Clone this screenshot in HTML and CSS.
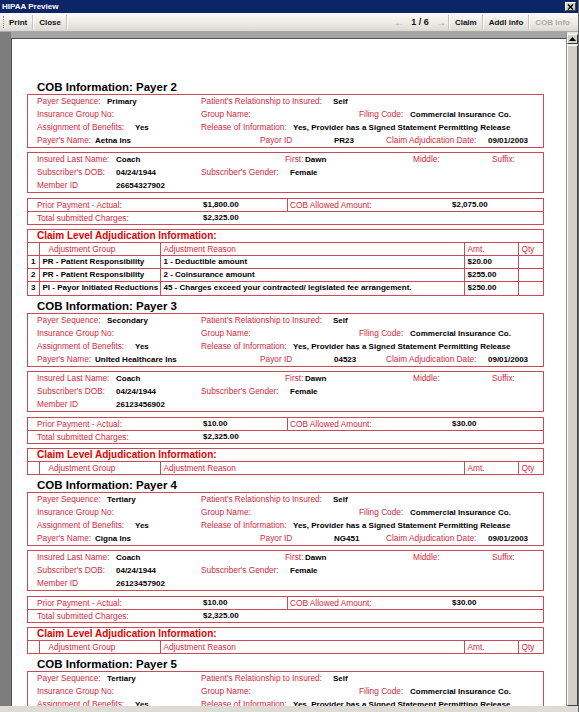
FILE: index.html
```html
<!DOCTYPE html>
<html>
<head>
<meta charset="utf-8">
<title>HIPAA Preview</title>
<link rel="stylesheet" href="styles.css">
</head>
<body>
<div class="window">
  <div class="titlebar">
    <span class="title">HIPAA Preview</span>
    <span class="xbtn"><svg width="7" height="6" viewBox="0 0 7 6"><path d="M1 0.5 L6 5.5 M6 0.5 L1 5.5" stroke="#000" stroke-width="1.4"/></svg></span>
  </div>
  <div class="toolbar">
    <span class="grip"></span>
    <span class="tb first">Print</span><span class="sep"></span>
    <span class="tb">Close</span><span class="sep"></span>
    <span class="spacer"></span>
    <span class="arrow">&#8592;</span><span class="pager">1 / 6</span><span class="arrow">&#8594;</span><span class="sep"></span>
    <span class="tb">Claim</span><span class="sep"></span>
    <span class="tb">Addl info</span><span class="sep"></span>
    <span class="tb dis">COB info</span>
  </div>
  <div class="viewer">
    <div class="docarea">
      <div class="page">

        <section class="payer">
          <h2 class="ph">COB Information: Payer 2</h2>
          <div class="box">
            <div class="row"><span class="l w70">Payer Sequence:</span><span class="v w94">Primary</span><span class="l w132">Patient's Relationship to Insured:</span><span class="v">Self</span></div>
            <div class="row"><span class="l w164">Insurance Group No:</span><span class="l w158">Group Name:</span><span class="l w51">Filing Code:</span><span class="v">Commercial Insurance Co.</span></div>
            <div class="row"><span class="l w98">Assignment of Benefits:</span><span class="v w66">Yes</span><span class="l w92">Release of Information:</span><span class="v">Yes, Provider has a Signed Statement Permitting Release</span></div>
            <div class="row"><span class="l w58">Payer's Name:</span><span class="v w165">Aetna Ins</span><span class="l w74">Payor ID</span><span class="v w52">PR23</span><span class="l w102">Claim Adjudication Date:</span><span class="v">09/01/2003</span></div>
          </div>
          <div class="box gap4">
            <div class="row"><span class="l w79">Insured Last Name:</span><span class="v w169">Coach</span><span class="l w20">First:</span><span class="v w108">Dawn</span><span class="l w79">Middle:</span><span class="l">Suffix:</span></div>
            <div class="row"><span class="l w79">Subscriber's DOB:</span><span class="v w85">04/24/1944</span><span class="l w89">Subscriber's Gender:</span><span class="v">Female</span></div>
            <div class="row"><span class="l w79">Member ID</span><span class="v">26654327902</span></div>
          </div>
          <div class="box pay gap5">
            <div class="prow top"><div class="pcell left"><span class="l w166">Prior Payment - Actual:</span><span class="v">$1,800.00</span></div><div class="pcell right"><span class="l w162">COB Allowed Amount:</span><span class="v">$2,075.00</span></div></div>
            <div class="prow"><div class="pcell left"><span class="l w166">Total submitted Charges:</span><span class="v">$2,325.00</span></div></div>
          </div>
          <div class="box adj gap4">
            <div class="adjtitle">Claim Level Adjudication Information:</div>
            <table class="adjt">
              <colgroup><col class="cn"><col class="cg"><col class="cr"><col class="ca"><col class="cq"></colgroup>
              <tr class="hdr"><td></td><td class="hg">Adjustment Group</td><td>Adjustment Reason</td><td>Amt.</td><td>Qty</td></tr>
              <tr><td class="num">1</td><td>PR - Patient Responsibility</td><td>1 - Deductible amount</td><td>$20.00</td><td></td></tr>
              <tr><td class="num">2</td><td>PR - Patient Responsibility</td><td>2 - Coinsurance amount</td><td>$255.00</td><td></td></tr>
              <tr><td class="num">3</td><td>PI - Payor Initiated Reductions</td><td>45 - Charges exceed your contracted/ legislated fee arrangement.</td><td>$250.00</td><td></td></tr>
            </table>
          </div>
        </section>

        <section class="payer">
          <h2 class="ph">COB Information: Payer 3</h2>
          <div class="box">
            <div class="row"><span class="l w70">Payer Sequence:</span><span class="v w94">Secondary</span><span class="l w132">Patient's Relationship to Insured:</span><span class="v">Self</span></div>
            <div class="row"><span class="l w164">Insurance Group No:</span><span class="l w158">Group Name:</span><span class="l w51">Filing Code:</span><span class="v">Commercial Insurance Co.</span></div>
            <div class="row"><span class="l w98">Assignment of Benefits:</span><span class="v w66">Yes</span><span class="l w92">Release of Information:</span><span class="v">Yes, Provider has a Signed Statement Permitting Release</span></div>
            <div class="row"><span class="l w58">Payer's Name:</span><span class="v w165">United Healthcare Ins</span><span class="l w74">Payor ID</span><span class="v w52">04523</span><span class="l w102">Claim Adjudication Date:</span><span class="v">09/01/2003</span></div>
          </div>
          <div class="box gap4">
            <div class="row"><span class="l w79">Insured Last Name:</span><span class="v w169">Coach</span><span class="l w20">First:</span><span class="v w108">Dawn</span><span class="l w79">Middle:</span><span class="l">Suffix:</span></div>
            <div class="row"><span class="l w79">Subscriber's DOB:</span><span class="v w85">04/24/1944</span><span class="l w89">Subscriber's Gender:</span><span class="v">Female</span></div>
            <div class="row"><span class="l w79">Member ID</span><span class="v">26123456902</span></div>
          </div>
          <div class="box pay gap5">
            <div class="prow top"><div class="pcell left"><span class="l w166">Prior Payment - Actual:</span><span class="v">$10.00</span></div><div class="pcell right"><span class="l w162">COB Allowed Amount:</span><span class="v">$30.00</span></div></div>
            <div class="prow"><div class="pcell left"><span class="l w166">Total submitted Charges:</span><span class="v">$2,325.00</span></div></div>
          </div>
          <div class="box adj gap4">
            <div class="adjtitle">Claim Level Adjudication Information:</div>
            <table class="adjt">
              <colgroup><col class="cn"><col class="cg"><col class="cr"><col class="ca"><col class="cq"></colgroup>
              <tr class="hdr"><td></td><td class="hg">Adjustment Group</td><td>Adjustment Reason</td><td>Amt.</td><td>Qty</td></tr>
            </table>
          </div>
        </section>

        <section class="payer">
          <h2 class="ph">COB Information: Payer 4</h2>
          <div class="box">
            <div class="row"><span class="l w70">Payer Sequence:</span><span class="v w94">Tertiary</span><span class="l w132">Patient's Relationship to Insured:</span><span class="v">Self</span></div>
            <div class="row"><span class="l w164">Insurance Group No:</span><span class="l w158">Group Name:</span><span class="l w51">Filing Code:</span><span class="v">Commercial Insurance Co.</span></div>
            <div class="row"><span class="l w98">Assignment of Benefits:</span><span class="v w66">Yes</span><span class="l w92">Release of Information:</span><span class="v">Yes, Provider has a Signed Statement Permitting Release</span></div>
            <div class="row"><span class="l w58">Payer's Name:</span><span class="v w165">Cigna Ins</span><span class="l w74">Payor ID</span><span class="v w52">NG451</span><span class="l w102">Claim Adjudication Date:</span><span class="v">09/01/2003</span></div>
          </div>
          <div class="box gap4">
            <div class="row"><span class="l w79">Insured Last Name:</span><span class="v w169">Coach</span><span class="l w20">First:</span><span class="v w108">Dawn</span><span class="l w79">Middle:</span><span class="l">Suffix:</span></div>
            <div class="row"><span class="l w79">Subscriber's DOB:</span><span class="v w85">04/24/1944</span><span class="l w89">Subscriber's Gender:</span><span class="v">Female</span></div>
            <div class="row"><span class="l w79">Member ID</span><span class="v">26123457902</span></div>
          </div>
          <div class="box pay gap5">
            <div class="prow top"><div class="pcell left"><span class="l w166">Prior Payment - Actual:</span><span class="v">$10.00</span></div><div class="pcell right"><span class="l w162">COB Allowed Amount:</span><span class="v">$30.00</span></div></div>
            <div class="prow"><div class="pcell left"><span class="l w166">Total submitted Charges:</span><span class="v">$2,325.00</span></div></div>
          </div>
          <div class="box adj gap4">
            <div class="adjtitle">Claim Level Adjudication Information:</div>
            <table class="adjt">
              <colgroup><col class="cn"><col class="cg"><col class="cr"><col class="ca"><col class="cq"></colgroup>
              <tr class="hdr"><td></td><td class="hg">Adjustment Group</td><td>Adjustment Reason</td><td>Amt.</td><td>Qty</td></tr>
            </table>
          </div>
        </section>

        <section class="payer">
          <h2 class="ph">COB Information: Payer 5</h2>
          <div class="box">
            <div class="row"><span class="l w70">Payer Sequence:</span><span class="v w94">Tertiary</span><span class="l w132">Patient's Relationship to Insured:</span><span class="v">Self</span></div>
            <div class="row"><span class="l w164">Insurance Group No:</span><span class="l w158">Group Name:</span><span class="l w51">Filing Code:</span><span class="v">Commercial Insurance Co.</span></div>
            <div class="row"><span class="l w98">Assignment of Benefits:</span><span class="v w66">Yes</span><span class="l w92">Release of Information:</span><span class="v">Yes, Provider has a Signed Statement Permitting Release</span></div>
            <div class="row"><span class="l w58">Payer's Name:</span><span class="v w165">Cigna Ins</span><span class="l w74">Payor ID</span><span class="v w52">NG451</span><span class="l w102">Claim Adjudication Date:</span><span class="v">09/01/2003</span></div>
          </div>
        </section>

      </div>
    </div>
    <div class="scrollbar">
      <div class="sbtn"><svg width="7" height="4" viewBox="0 0 7 4"><path d="M3.5 0 L7 4 L0 4 Z" fill="#000"/></svg></div>
      <div class="thumb"></div>
    </div>
  </div>
  <div class="bottomedge"></div>
</div>
</body>
</html>
```

FILE: styles.css
```css
* { box-sizing: border-box; }
html, body { margin: 0; padding: 0; }
body {
  width: 579px;
  height: 712px;
  overflow: hidden;
  background: #d4d0c8;
  font-family: "Liberation Sans", Arial, sans-serif;
}
.window {
  display: flex;
  flex-direction: column;
  height: 712px;
  border-right: 1px solid #6a6a6a;
}
.titlebar {
  height: 13px;
  flex: none;
  background: #0c2566;
  display: flex;
  align-items: center;
  justify-content: space-between;
  padding: 0 2px 0 2px;
}
.title { color: #fff; font-weight: bold; font-size: 8px; }
.xbtn {
  width: 11px;
  height: 9px;
  background: #d4d0c8;
  border: 1px solid;
  border-color: #fff #404040 #404040 #fff;
  display: flex;
  align-items: center;
  justify-content: center;
}
.toolbar {
  height: 19px;
  flex: none;
  background: linear-gradient(#fbfbfa, #ebe9e4 60%, #dcd9d2);
  border-bottom: 1px solid #a8a8a8;
  display: flex;
  align-items: center;
  padding: 0 8px 0 3px;
  font-size: 8px;
  font-weight: bold;
  color: #111;
  white-space: nowrap;
}
.grip {
  width: 2px;
  height: 12px;
  border-left: 1px dotted #888;
  margin-right: 1px;
}
.tb { padding: 0 5px; }
.tb.first { padding-left: 3px; }
.tb.dis { color: #a8a8a8; padding-right: 0; }
.sep {
  width: 2px;
  height: 14px;
  border-left: 1px solid #c4c2bc;
  border-right: 1px solid #fff;
}
.spacer { flex: 1; }
.arrow { color: #9a9a9a; font-weight: normal; font-size: 10px; padding: 0 2px; }
.pager { font-size: 9px; padding: 0 5px; }

.viewer {
  flex: 1;
  display: flex;
  min-height: 0;
}
.docarea {
  flex: 1;
  display: flex;
  background: #a4a4a4;
  padding: 6px 0 0 0;
  border-left: 11px solid #7d7d7d;
  min-height: 0;
}
.page {
  flex: 1;
  background: #fff;
  border-top: 1px solid #505050;
  border-left: 1px solid #505050;
  padding: 41px 22px 0 15px;
  overflow: hidden;
}
.scrollbar {
  width: 12px;
  flex: none;
  display: flex;
  flex-direction: column;
  background: #e6e4de;
  border-left: 1px solid #909090;
  padding-top: 2px;
}
.sbtn {
  height: 10px;
  background: #d4d0c8;
  border: 1px solid;
  border-color: #fff #404040 #404040 #fff;
  display: flex;
  align-items: center;
  justify-content: center;
}
.thumb {
  flex: 1;
  margin-top: 1px;
  background: #d4d0c8;
  border: 1px solid;
  border-color: #fff #404040 #404040 #fff;
}
.bottomedge { height: 6px; flex: none; background: #dedbd4; }

/* document */
.ph {
  margin: 3px 0 0 10px;
  font-size: 11.5px;
  line-height: 14px;
  height: 14px;
  font-weight: bold;
  color: #000;
}
.payer:first-child .ph { margin-top: 0; }
.box {
  border: 1px solid #c94a58;
  padding-left: 9px;
}
.gap4 { margin-top: 4px; }
.gap5 { margin-top: 5px; }
.row {
  display: flex;
  height: 13px;
  line-height: 13px;
  font-size: 8px;
  white-space: nowrap;
}
.l { color: #d22a3c; flex: none; font-size: 8.3px; }
.v { color: #000; font-weight: bold; flex: none; }
.w20 { width: 20px; } .w51 { width: 51px; } .w52 { width: 52px; } .w58 { width: 58px; }
.w66 { width: 66px; } .w70 { width: 70px; } .w74 { width: 74px; }
.w79 { width: 79px; } .w85 { width: 85px; } .w89 { width: 89px; } .w92 { width: 92px; }
.w94 { width: 94px; } .w98 { width: 98px; } .w102 { width: 102px; } .w108 { width: 108px; }
.w132 { width: 132px; } .w158 { width: 158px; } .w162 { width: 162px; } .w164 { width: 164px; }
.w165 { width: 165px; } .w166 { width: 166px; } .w169 { width: 169px; }

.pay { padding-left: 0; }
.prow {
  display: flex;
  height: 12px;
  line-height: 12px;
  font-size: 8px;
  white-space: nowrap;
}
.prow.top { height: 13px; border-bottom: 1px solid #c94a58; }
.pcell { display: flex; }
.pcell.left { width: 260px; padding-left: 9px; }
.prow.top .pcell.left { border-right: 1px solid #c94a58; }
.pcell.right { padding-left: 2px; }

.adj { padding-left: 0; }
.adjtitle {
  height: 13px;
  line-height: 12px;
  padding-left: 9px;
  font-size: 10px;
  font-weight: bold;
  color: #e00000;
  border-bottom: 1px solid #c94a58;
}
.adjt {
  width: 100%;
  border-collapse: collapse;
  table-layout: fixed;
  font-size: 8px;
}
.cn { width: 11px; }
.cg { width: 121px; }
.cr { width: 304px; }
.ca { width: 54px; }
.cq { width: auto; }
.adjt td {
  height: 13px;
  line-height: 12px;
  padding: 0 0 0 3px;
  border: 1px solid #c94a58;
  font-weight: bold;
  color: #000;
  white-space: nowrap;
  overflow: hidden;
}
.adjt tr:first-child td { border-top: none; }
.adjt tr:last-child td { border-bottom: none; }
.adjt td:first-child { border-left: none; }
.adjt td:last-child { border-right: none; }
.adjt .hdr td { font-weight: normal; color: #d22a3c; height: 12px; font-size: 8.3px; }
.adjt .hdr td.hg { padding-left: 9px; }
.adjt td.num { padding: 0; text-align: center; }
```
